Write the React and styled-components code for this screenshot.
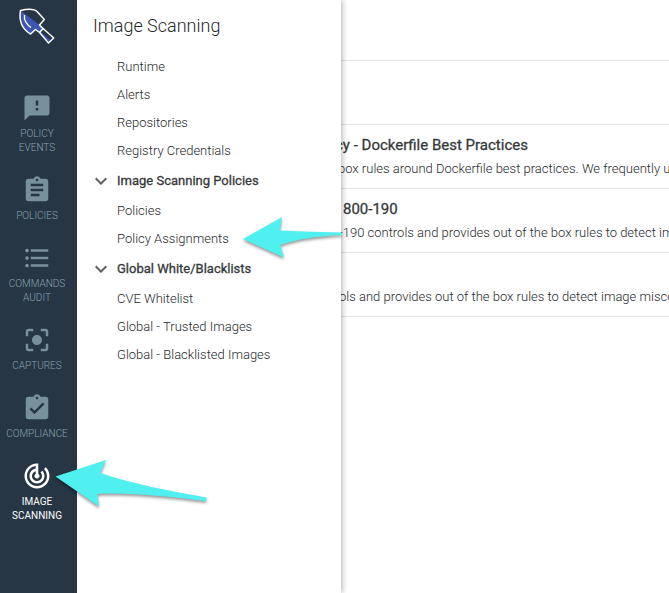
import React from "react";
import styled, { createGlobalStyle } from "styled-components";
import {
  MdFeedback,
  MdAssignment,
  MdFormatListBulleted,
  MdCenterFocusStrong,
  MdAssignmentTurnedIn,
  MdTrackChanges,
  MdExpandMore,
} from "react-icons/md";

const GlobalStyle = createGlobalStyle`
  * { box-sizing: border-box; }
  body {
    margin: 0;
    background: #fff;
    font-family: Roboto, "Liberation Sans", sans-serif;
    color: #26292a;
    overflow: hidden;
  }
`;

const Page = styled.div`
  position: relative;
  display: flex;
  width: 669px;
  height: 593px;
  overflow: hidden;
`;

const Sidebar = styled.nav`
  flex: 0 0 77px;
  height: 100%;
  padding-right: 3px;
  background: #263645;
  display: flex;
  flex-direction: column;
  align-items: center;
`;

const Logo = styled.svg`
  width: 42px;
  height: 42px;
  margin: 5px 0 46px;
  flex: none;
`;

const NavItem = styled.a`
  display: flex;
  flex-direction: column;
  align-items: center;
  margin-bottom: 20px;
  color: ${(p) => (p.$active ? "#ffffff" : "#78909c")};
  font-size: 10px;
  line-height: 14px;
  text-align: center;
  text-transform: uppercase;

  svg {
    width: 30px;
    height: 30px;
    margin-bottom: 4px;
  }
`;

const NavLabel = styled.span`
  width: 74px;
  padding: 0 4px;
  white-space: pre-line;
  font-weight: ${(p) => (p.$active ? 400 : 300)};
  color: ${(p) => (p.$active ? "#ffffff" : "#8ba2ae")};
`;

const Panel = styled.aside`
  position: relative;
  z-index: 1;
  flex: 0 0 264px;
  height: 100%;
  background: #fff;
  box-shadow: 0 0 7px rgba(0, 0, 0, 0.4);
  clip-path: inset(0 -12px 0 0);
`;

const PanelTitle = styled.h1`
  margin: 0;
  height: 52px;
  padding-left: 16px;
  font-size: 18px;
  line-height: 52px;
  font-weight: 300;
`;

const MenuItem = styled.div`
  height: 28px;
  padding: 1px 0 0 40px;
  font-size: 13px;
  line-height: 28px;
  font-weight: 300;
`;

const MenuGroup = styled.div`
  display: flex;
  align-items: center;
  height: 32px;
  padding-left: 12px;
  font-size: 13px;
  font-weight: 400;
  color: #36393a;
  -webkit-text-stroke: 0.3px #36393a;

  svg {
    width: 24px;
    height: 24px;
    margin: 2px 4px 0 0;
    color: #5c6062;
  }
`;

const Main = styled.main`
  flex: 1;
  min-width: 0;
  overflow: hidden;
`;

const Bar = styled.div`
  height: ${(p) => p.$height}px;
  border-bottom: 1px solid #e6e6e6;
`;

const Policy = styled.article`
  height: 64px;
  padding-top: 10px;
  border-bottom: 1px solid #e6e6e6;
  white-space: nowrap;
`;

const PolicyName = styled.h2`
  margin: 0;
  height: 20px;
  font-size: 15px;
  line-height: 20px;
  font-weight: 400;
  color: #36393a;
  -webkit-text-stroke: 0.3px #36393a;
  text-indent: ${(p) => p.$shift}px;
`;

const PolicyText = styled.p`
  margin: 4px 0 0;
  font-size: 13px;
  line-height: 20px;
  font-weight: 300;
  text-indent: ${(p) => p.$shift}px;
`;

const Arrows = styled.svg`
  position: absolute;
  inset: 0;
  width: 669px;
  height: 593px;
  z-index: 2;
  pointer-events: none;
  filter: drop-shadow(0 2px 1.5px rgba(0, 0, 0, 0.4));
`;

const navItems = [
  { icon: MdFeedback, label: "Policy\nEvents" },
  { icon: MdAssignment, label: "Policies" },
  { icon: MdFormatListBulleted, label: "Commands\nAudit" },
  { icon: MdCenterFocusStrong, label: "Captures" },
  { icon: MdAssignmentTurnedIn, label: "Compliance" },
  { icon: MdTrackChanges, label: "Image\nScanning", active: true },
];

const groups = [
  { items: ["Runtime", "Alerts", "Repositories", "Registry Credentials"] },
  { title: "Image Scanning Policies", items: ["Policies", "Policy Assignments"] },
  {
    title: "Global White/Blacklists",
    items: ["CVE Whitelist", "Global - Trusted Images", "Global - Blacklisted Images"],
  },
];

const policies = [
  {
    name: "cy - Dockerfile Best Practices",
    nameShift: -6,
    text: "box rules around Dockerfile best practices. We frequently update",
    textShift: -3,
  },
  {
    name: "800-190",
    nameShift: 2,
    text: "-190 controls and provides out of the box rules to detect image",
    textShift: -2,
  },
  {
    name: "",
    nameShift: 0,
    text: "ols and provides out of the box rules to detect image misconfigurations",
    textShift: -2,
  },
];

function Trowel() {
  return (
    <Logo viewBox="16 5 42 42" fill="none" strokeLinejoin="round">
      <path d="M20.500 10.500C19 20 21 29 30.500 34L35.500 29.500L39.500 32.500L48.500 43L53.700 38L42.500 28L39.500 25Z" fill="#3f55b5" />
      <path d="M40 31L43 28.500L53.700 38L51 40.500Z" fill="#263645" />
      <path d="M20.500 10.500C27 9 34 8.500 37.500 12L44.300 19.600L39.500 25L42.500 28L53.700 38L48.500 43L39.500 32.500L35.500 29.500L30.500 34C22 29 18.500 22 20.500 10.500Z" stroke="#fff" strokeWidth="1.500" />
      <path d="M24.500 15C23.500 20 27 25 31 27.500" stroke="#fff" strokeWidth="1.300" />
      <path d="M39.500 32.500L43.500 28" stroke="#fff" strokeWidth="1.500" />
    </Logo>
  );
}

export default function App() {
  return (
    <>
      <GlobalStyle />
      <Page>
        <Sidebar>
          <Trowel />
          {navItems.map(({ icon: Icon, label, active }) => (
            <NavItem key={label} $active={active}>
              <Icon />
              <NavLabel $active={active}>{label}</NavLabel>
            </NavItem>
          ))}
        </Sidebar>
        <Panel>
          <PanelTitle>Image Scanning</PanelTitle>
          {groups.map(({ title, items }) => (
            <React.Fragment key={title || "top"}>
              {title && (
                <MenuGroup>
                  <MdExpandMore />
                  {title}
                </MenuGroup>
              )}
              {items.map((item) => (
                <MenuItem key={item}>{item}</MenuItem>
              ))}
            </React.Fragment>
          ))}
        </Panel>
        <Main>
          <Bar $height={61} />
          <Bar $height={64} />
          {policies.map((p) => (
            <Policy key={p.text}>
              <PolicyName $shift={p.nameShift}>{p.name}</PolicyName>
              <PolicyText $shift={p.textShift}>{p.text}</PolicyText>
            </Policy>
          ))}
        </Main>
        <Arrows viewBox="0 0 669 593" fill="#4ff0ef">
          <path d="M243 239L282 217L280 230.500Q312 232 341.500 232.500L342 235Q302 237 280.500 245L284 257.500Z" />
          <path d="M55.500 476.500L106 460L100.500 473C132 484 170 491 206.500 497.500V501C170 497 130 492 97.500 494L99 506.500Z" />
        </Arrows>
      </Page>
    </>
  );
}
